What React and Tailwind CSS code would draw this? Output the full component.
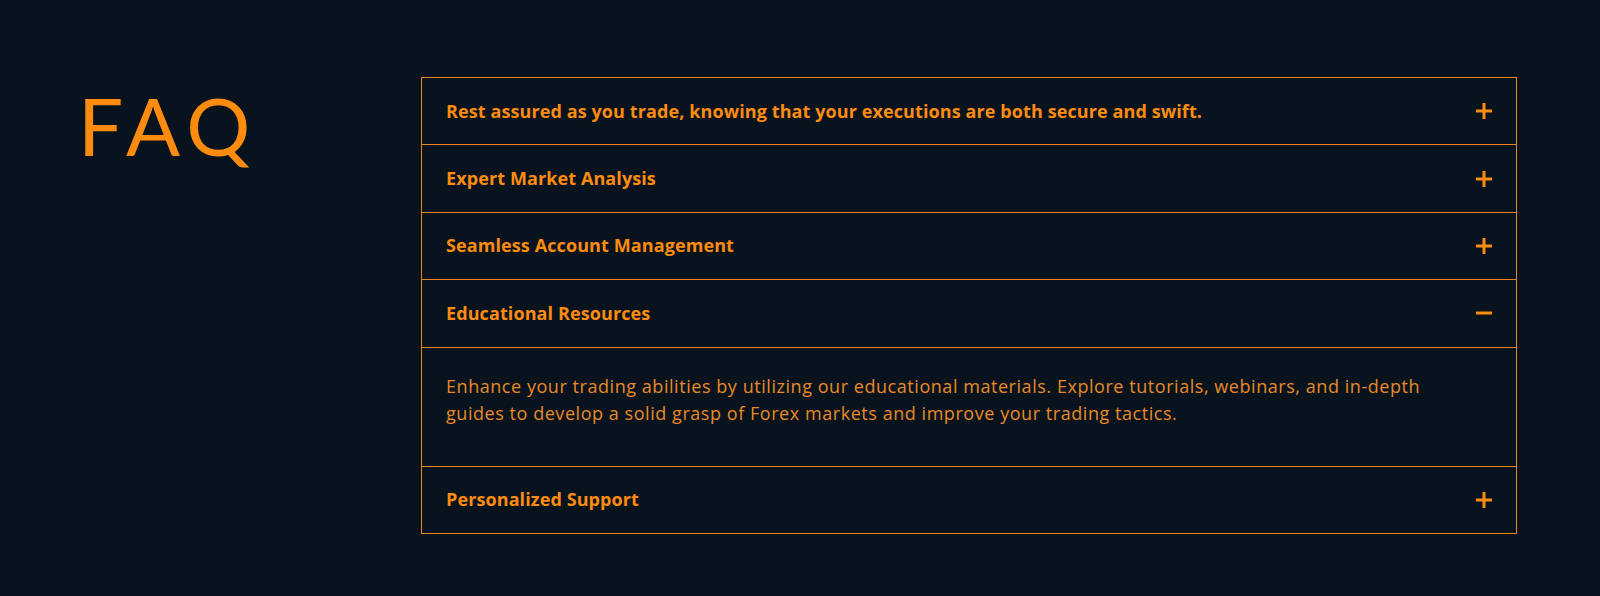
import { useState } from "react";

const items = [
  {
    q: "Rest assured as you trade, knowing that your executions are both secure and swift.",
    a: "Our infrastructure is built for speed and reliability, so every order you place is executed quickly and protected at every step.",
  },
  {
    q: "Expert Market Analysis",
    a: "Get insights from seasoned analysts who track the markets daily and share actionable ideas.",
  },
  {
    q: "Seamless Account Management",
    a: "Manage deposits, withdrawals and settings from one simple dashboard.",
  },
  {
    q: "Educational Resources",
    a: "Enhance your trading abilities by utilizing our educational materials. Explore tutorials, webinars, and in-depth guides to develop a solid grasp of Forex markets and improve your trading tactics.",
  },
  {
    q: "Personalized Support",
    a: "Our support team is available around the clock to help with any question.",
  },
];

function PlusMinus({ open }) {
  return (
    <svg width="16" height="16" viewBox="0 0 16 16" className="shrink-0">
      <rect x="0" y="6.5" width="16" height="3" fill="#ff8c0f" />
      {!open && <rect x="6.5" y="0" width="3" height="16" fill="#ff8c0f" />}
    </svg>
  );
}

export default function App() {
  const [openIdx, setOpenIdx] = useState(3);

  return (
    <div className="w-full h-[596px] bg-[#08131e] flex px-[78px] pt-[77px]">
      <div className="w-[343px] shrink-0">
        <h2 className="text-[80px] leading-none text-[#ff8c0f] font-['Lato',sans-serif] mt-[8px] tracking-[7.5px]">
          FAQ
        </h2>
      </div>
      <div className="w-[1096px] self-start border border-[#f0841c]">
        {items.map((it, i) => (
          <div key={i} className={i > 0 ? "border-t border-[#f0841c]" : ""}>
            <button
              onClick={() => setOpenIdx(openIdx === i ? -1 : i)}
              className="w-full h-[66.4px] flex items-center justify-between px-6 text-left"
            >
              <span className="text-[18px] font-bold tracking-[0.1px] text-[#ff8c0f] font-['Open_Sans',sans-serif]">
                {it.q}
              </span>
              <PlusMinus open={openIdx === i} />
            </button>
            {openIdx === i && (
              <div className="border-t border-[#f0841c] px-6 pt-[25px] h-[119px]">
                <p className="text-[18px] leading-[27px] tracking-[0.55px] text-[#e98a26] font-['Open_Sans',sans-serif] max-w-[1010px]">
                  {it.a}
                </p>
              </div>
            )}
          </div>
        ))}
      </div>
    </div>
  );
}
